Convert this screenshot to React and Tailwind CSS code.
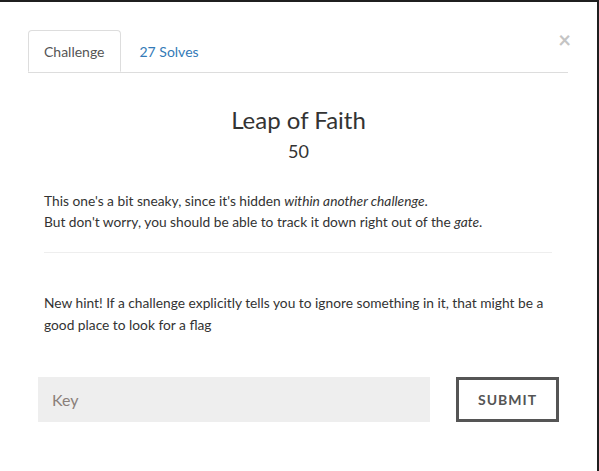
export default function App() {
  return (
    <div className="w-[599px] h-[471px] bg-[#1f1f1f] pt-[2px] pr-[2px] font-['Lato','Noto_Sans',sans-serif]">
      <div className="relative h-full bg-white">
        {/* Close */}
        <button className="absolute right-[26px] top-[27px] text-[22px] font-bold leading-[22px] text-[#c4c4c4]">
          ×
        </button>

        {/* Tabs */}
        <div className="pl-[28px] pr-[29px] pt-[28px]">
          <ul className="flex border-b border-[#ddd]">
            <li className="-mb-px mr-[2px] flex h-[42px] items-center rounded-t-[4px] border border-[#ddd] border-b-white px-[15px] text-[14px] text-[#555]">
              Challenge
            </li>
            <li className="flex h-[42px] items-center px-[17px] text-[14px] text-[#337ab7]">
              27 Solves
            </li>
          </ul>
        </div>

        {/* Header */}
        <div className="mt-[34px] text-center text-[#333]">
          <h3 className="text-[24px] leading-[26px]">Leap of Faith</h3>
          <p className="mt-[8px] text-[18px] leading-[20px]">50</p>
        </div>

        {/* Description */}
        <div className="px-[44px] pt-[29px] text-[13.75px] leading-[21px] text-[#333]">
          <p>
            This one's a bit sneaky, since it's hidden <em>within another challenge</em>.
            <br />
            But don't worry, you should be able to track it down right out of the <em>gate</em>.
          </p>
          <hr className="mr-[1px] mt-[20px] border-t border-[#eee]" />
          <p className="mt-[39px] leading-[22px]">
            New hint! If a challenge explicitly tells you to ignore something in it, that might be a good place to look for a flag
          </p>
        </div>

        {/* Submit row */}
        <div className="mt-[41px] flex items-stretch pl-[38px] pr-[38px]">
          <div className="flex h-[45px] w-[392px] items-center bg-[#eee] px-[14px] text-[16px] text-[#8a7f7a]">
            Key
          </div>
          <div className="ml-auto flex h-[45px] w-[103px] items-center justify-center border-[3px] border-[#555] text-[14px] font-bold tracking-[1px] text-[#555]">
            SUBMIT
          </div>
        </div>
      </div>
    </div>
  )
}
